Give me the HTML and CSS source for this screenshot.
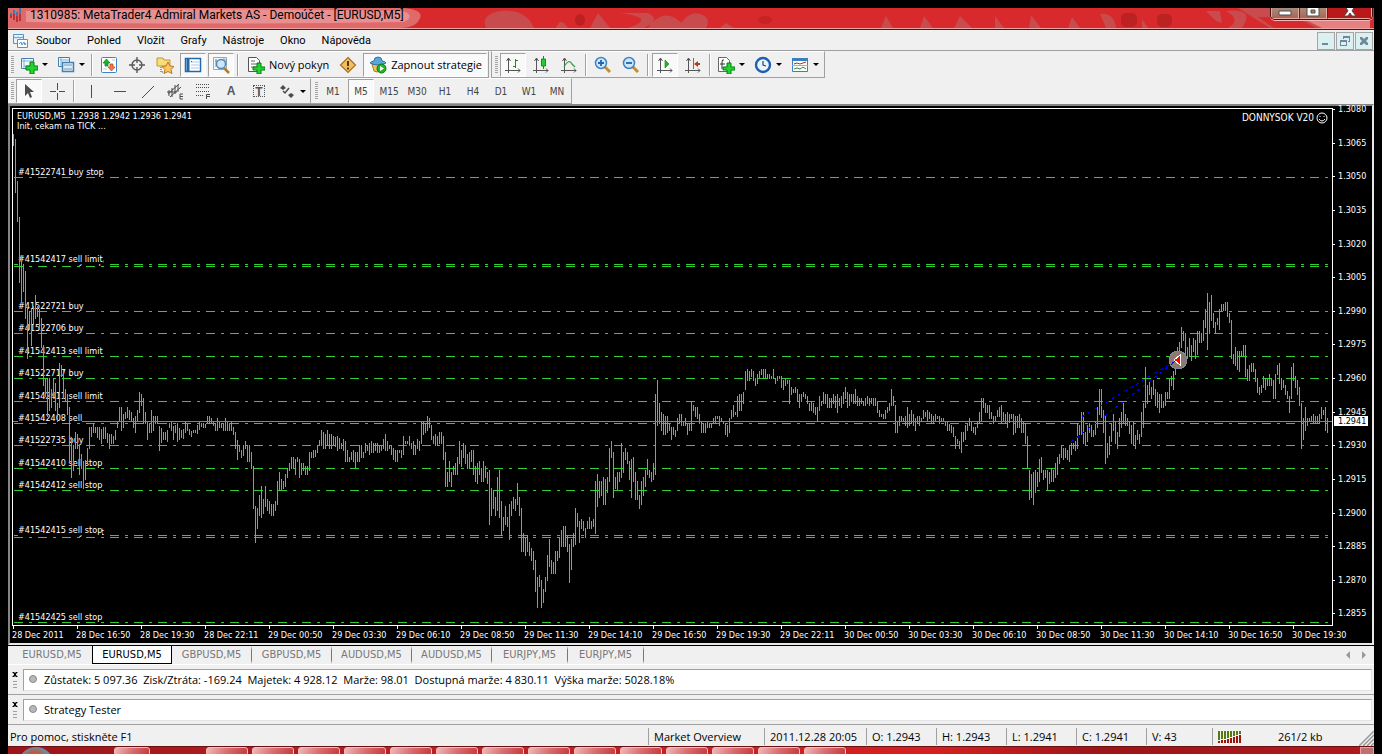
FILE: index.html
```html
<!DOCTYPE html>
<html lang="cs">
<head>
<meta charset="utf-8">
<title>MetaTrader4</title>
<link rel="stylesheet" href="styles.css">
</head>
<body>
<div class="window">
  <header class="title-bar">
    <svg class="title-art" viewBox="0 0 1366 20" preserveAspectRatio="none" aria-hidden="true">
      <path d="M0 0H395Q418 2 411 12Q407 20 390 20H0z" fill="#e0696a"/>
      <path d="M18 3Q200 0 395 3Q408 8 396 14Q200 17 18 14z" fill="#e89091"/>
      <path d="M478 20Q472 7 492 3Q518 0 526 20zM548 20Q552 8 560 20zM582 20L590 5L602 20zM612 5H640Q654 12 636 20H620Q650 10 612 5zM640 20Q654 0 670 12L680 20zM670 20Q680 2 692 6Q704 10 698 20zM712 20l6-5 8 5zM873 20l5-12 7 12zM912 20l4-12 9 12zM946 20l6-12 12 12zM987 20V8l9 12zM1021 20l2-13 10 13zM1060 20l4-11 8 11zM1092 6Q1106 4 1108 20H1098zM1134 20v-9l6 9zM1198 3h14l2 12-6-2zM1218 3q30-3 16 17h-14q14-8-2-17z" fill="#c84b4d"/>
      <ellipse cx="572" cy="12" rx="5" ry="6" fill="#be2021"/><ellipse cx="757" cy="12" rx="7" ry="4" fill="#c82223"/>
      <rect x="1113" y="5" width="16" height="14" rx="5" fill="#bd2223"/><rect x="1149" y="6" width="15" height="13" rx="5" fill="#bd2223"/>
      <path d="M1230 0h132v20H1262z" fill="#c84b4d"/><path d="M1250 9h38l20 11h-42z" fill="#d82a2c"/><path d="M1294 10h68v10h-48z" fill="#e57f80"/>
    </svg>
    <svg class="app-icon" viewBox="0 0 12 14" aria-hidden="true"><path d="M0 5h2v5H0zM3 2h2v8H3zM6 4h2v5H6zM9 0h2v9H9z" fill="#4178ac"/><path d="M0 7h2v3H0zM3 6h2v6H3zM6 8h2v6H6zM9 6h2v7H9z" fill="#bd3036"/></svg>
    <h1 class="title">1310985: MetaTrader4 Admiral Markets AS - Demoúčet - [EURUSD,M5]</h1>
    <div class="caption">
      <button class="cap cap-min" aria-label="Minimalizovat"><svg viewBox="0 0 14 10"><path d="M1 3h12v4H1z"/></svg></button>
      <button class="cap cap-max" aria-label="Maximalizovat"><svg viewBox="0 0 14 10"><path fill-rule="evenodd" d="M1-2h12v10H1zM5 2h4v3H5z"/></svg></button>
      <button class="cap cap-close" aria-label="Zavřít"><svg viewBox="0 0 14 10"><path d="M2-2h4l1 2 1-2h4L9 3l4 5H9L7 5 5 8H1l4-5z"/></svg></button>
    </div>
  </header>

  <nav class="menu" aria-label="Hlavní nabídka">
    <svg class="menu-icon" viewBox="0 0 16 16" aria-hidden="true"><path d="M1.500 1.500h10v9h-10z" fill="#e8f4ff" stroke="#4f95cc"/><path d="M2 4l2 1 2-1 2 1 3-1" fill="none" stroke="#4f95cc"/><path d="M5.500 6.500h10v8h-10z" fill="#fff" stroke="#4f95cc"/><path d="M7 11l2-2 1 3 2-3 1 3 1-2" fill="none" stroke="#4f95cc"/></svg>
    <button>Soubor</button><button>Pohled</button><button>Vložit</button><button>Grafy</button><button>Nástroje</button><button>Okno</button><button>Nápověda</button>
    <div class="mdi">
      <button aria-label="Minimalizovat graf"><svg viewBox="0 0 16 16"><path d="M4 10h6v2H4z"/></svg></button>
      <button aria-label="Obnovit graf"><svg viewBox="0 0 16 16"><path fill-rule="evenodd" d="M6 3h7v6h-2V8h1V5H7v1H6zM3 7h7v6H3zM4 9v3h5V9z"/></svg></button>
      <button aria-label="Zavřít graf"><svg viewBox="0 0 16 16"><path d="M4 4h2l2 2 2-2h2v2l-2 2 2 2v2h-2l-2-2-2 2H4v-2l2-2-2-2z"/></svg></button>
    </div>
  </nav>

  <div class="bars-row main-row">
    <div class="toolbar" role="toolbar" aria-label="Standardní">
      <span class="grip"></span>
      <button class="tool split" aria-label="Nový graf"><svg viewBox="0 0 18 18"><path d="M1.500 2.500h12v10h-12z" fill="#f2f8fd" stroke="#4680ad"/><path d="M2 5h11M4 3v9M4 10h8" stroke="#84b0d0" fill="none"/><path d="M10 6h4v4h4v4h-4v4h-4v-4H6v-4h4z" fill="#1fd62c" stroke="#087d12"/></svg><i class="arrow"></i></button>
      <button class="tool split" aria-label="Profily"><svg viewBox="0 0 18 18"><path d="M1.500 1.500h11v9h-11z" fill="#f2f8fd" stroke="#4680ad"/><path d="M3 4h9M4 2v8" stroke="#84b0d0"/><path d="M5.500 6.500h11v9h-11z" fill="#dcecf8" stroke="#4680ad" stroke-width="1.500"/><path d="M7 9h8M7 13h8" stroke="#6a9cc4"/></svg><i class="arrow"></i></button>
      <span class="sep"></span>
      <button class="tool" aria-label="Přehled trhu"><svg viewBox="0 0 18 18"><rect x="1.500" y="1.500" width="15" height="15" rx="1" fill="#fff" stroke="#3b86c8"/><path d="M3 7l3.500-4L10 7H8v3H5V7z" fill="#1ab425" stroke="#0c7b16" stroke-width=".7"/><path d="M8 11l3.500 4 3.500-4h-2V8h-3v3z" fill="#f0784a" stroke="#b84018" stroke-width=".7"/><path d="M12 4h3M3 13h4" stroke="#b9c7dc"/></svg></button>
      <button class="tool" aria-label="Okno dat"><svg viewBox="0 0 18 18"><circle cx="9" cy="9" r="5" fill="none" stroke="#595959" stroke-width="1.400"/><path d="M9 1v6M9 11v6M1 9h6M11 9h6" stroke="#595959" stroke-width="1.400"/></svg></button>
      <button class="tool" aria-label="Navigátor"><svg viewBox="0 0 18 18"><path d="M1 2h6l1 2h6v6H1z" fill="#f8dd7c" stroke="#c29a2d"/><path d="M5 11v5h4" stroke="#444" stroke-dasharray="1 1" fill="none"/><path d="M12 6l2 4 4 .500-3 3 1 4-4-2-4 2 1-4-3-3 4-.500z" fill="#fbc766" stroke="#b8771d"/></svg></button>
      <button class="tool on" aria-label="Terminál" aria-pressed="true"><svg viewBox="0 0 18 18"><rect x="1.500" y="2.500" width="15" height="13" fill="#fff" stroke="#2268ad" stroke-width="1.500"/><path d="M4 3v12" stroke="#2268ad" stroke-width="3"/><path d="M7 6h8M7 9h8M7 12h8" stroke="#aac6ea"/><path d="M7 5h1v1H7z" fill="#e22"/></svg></button>
      <button class="tool on" aria-label="Tester strategií" aria-pressed="true"><svg viewBox="0 0 18 18"><path d="M1.500 1.500h13v12h-13z" fill="#f7f7f7" stroke="#a7a7a7"/><path d="M4 3v8M3 5h2M12 2v6M14 3v6" stroke="#69a"/><circle cx="9" cy="8" r="4.500" fill="#cfe5f8" stroke="#4a88c2" stroke-width="1.400"/><path d="M12 12l5 5" stroke="#b17e2c" stroke-width="2.500"/></svg></button>
      <span class="sep"></span>
      <button class="tool wide"><svg viewBox="0 0 18 18"><path d="M1.500 1.500h8l3 3v11h-11z" fill="#fff" stroke="#555"/><path d="M4 5h4M4 8h6M4 11h6" stroke="#666"/><path d="M10 7h4v4h4v3h-4v4h-4v-4H6v-3h4z" fill="#1fd62c" stroke="#087d12"/></svg>Nový pokyn</button>
      <button class="tool" aria-label="MetaEditor"><svg viewBox="0 0 18 18"><path d="M9 1.500L16.500 9 9 16.500 1.500 9z" fill="#f0bf62" stroke="#a9701a" stroke-width="1.200"/><path d="M9 5v5M9 11.500v2" stroke="#5a340a" stroke-width="2"/></svg></button>
      <button class="tool wide on" aria-pressed="true"><svg viewBox="0 0 18 18"><path d="M3 8h10l-2 7q-3 2-6 0z" fill="#efc25b" stroke="#a97b20"/><path d="M1 7q2-2 4-2 0-4 4-4t4 4q3 0 4 2-8 4-16 0z" fill="#5aa7da" stroke="#2f73a6"/><circle cx="12.500" cy="12.500" r="4.500" fill="#1fb52b" stroke="#0b7916"/><path d="M11 10l4 2.500-4 2.500z" fill="#fff"/></svg>Zapnout strategie</button>
    </div>
    <div class="toolbar spaced" role="toolbar" aria-label="Grafy">
      <span class="grip"></span>
      <button class="tool on" aria-label="Sloupcový graf" aria-pressed="true"><svg viewBox="0 0 18 18"><path d="M4.500 2v15M2.500 5l2-3 2 3M1 14.500h15M14 12.500l2 2-2 2" fill="none" stroke="#555"/><path d="M11.500 3v9M9 10.500h2M12 4.500h2" stroke="#138f1d"/></svg></button>
      <button class="tool" aria-label="Svíčkový graf"><svg viewBox="0 0 18 18"><path d="M4.500 2v15M2.500 5l2-3 2 3M1 14.500h15M14 12.500l2 2-2 2" fill="none" stroke="#555"/><path d="M11.500 0v13" stroke="#138f1d"/><path d="M9.500 3h4v7h-4z" fill="#21cf2d" stroke="#138f1d"/></svg></button>
      <button class="tool" aria-label="Čárový graf"><svg viewBox="0 0 18 18"><path d="M4.500 2v15M2.500 5l2-3 2 3M1 14.500h15M14 12.500l2 2-2 2" fill="none" stroke="#555"/><path d="M4 11q5-9 8-3l3 3" fill="none" stroke="#3aa043" stroke-width="1.300"/></svg></button>
      <span class="sep"></span>
      <button class="tool" aria-label="Přiblížit"><svg viewBox="0 0 18 18"><path d="M11 11l5 5" stroke="#c58f2d" stroke-width="3"/><circle cx="7" cy="7" r="5.500" fill="#cfe6fa" stroke="#4083c3" stroke-width="1.500"/><path d="M4 7h6M7 4v6" stroke="#2463ad" stroke-width="1.800"/></svg></button>
      <button class="tool" aria-label="Oddálit"><svg viewBox="0 0 18 18"><path d="M11 11l5 5" stroke="#c58f2d" stroke-width="3"/><circle cx="7" cy="7" r="5.500" fill="#cfe6fa" stroke="#4083c3" stroke-width="1.500"/><path d="M4 7h6" stroke="#2463ad" stroke-width="1.800"/></svg></button>
      <span class="sep"></span>
      <button class="tool on" aria-label="Automatický posun" aria-pressed="true"><svg viewBox="0 0 18 18"><path d="M4.500 2v15M2.500 5l2-3 2 3M1 14.500h15M14 12.500l2 2-2 2" fill="none" stroke="#555"/><path d="M9 4l4 4-4 4z" fill="#1fb92b" stroke="#0d7a16" stroke-width=".6"/></svg></button>
      <button class="tool" aria-label="Odsazení grafu"><svg viewBox="0 0 18 18"><path d="M4.500 2v15M2.500 5l2-3 2 3M1 14.500h15M14 12.500l2 2-2 2" fill="none" stroke="#555"/><path d="M9.500 2v11" stroke="#3d79b2"/><path d="M10 8l4-3v2h2v2h-2v2z" fill="#b73a18"/></svg></button>
      <span class="sep"></span>
      <button class="tool split" aria-label="Indikátory"><svg viewBox="0 0 18 18"><path d="M1.500 1.500h8l3 3v11h-11z" fill="#fff" stroke="#666"/><path d="M7 4q-2-1-2 2v7M3 8h5" stroke="#333" fill="none"/><path d="M10 7h4v4h4v3h-4v4h-4v-4H6v-3h4z" fill="#1fd62c" stroke="#087d12"/></svg><i class="arrow"></i></button>
      <button class="tool split" aria-label="Období"><svg viewBox="0 0 18 18"><circle cx="9" cy="9" r="7" fill="#eaf4ff" stroke="#1f5faf" stroke-width="2.400"/><path d="M9 5v4l3 1" stroke="#24456f" fill="none" stroke-width="1.200"/></svg><i class="arrow"></i></button>
      <button class="tool split" aria-label="Šablony"><svg viewBox="0 0 18 18"><path d="M1.500 2.500h15v13h-15z" fill="#fff" stroke="#3c7fc0"/><path d="M1 3.500h16" stroke="#3c7fc0" stroke-width="3"/><path d="M3 8l3-1 3 1 3-1 3-1" stroke="#a33a20" fill="none"/><path d="M1 9.500h16" stroke="#8fb5d8"/><path d="M3 13l3-1 3 1 3-2 3 2" stroke="#2c8f35" fill="none"/></svg><i class="arrow"></i></button>
    </div>
  </div>

  <div class="bars-row">
    <div class="toolbar" role="toolbar" aria-label="Čáry">
      <span class="grip"></span>
      <button class="tool on" aria-label="Kurzor" aria-pressed="true"><svg viewBox="0 0 18 18"><path d="M5 2v12l3-3 2 5 2-1-2-5h4z" fill="#4c4c4c"/></svg></button>
      <button class="tool" aria-label="Nitkový kříž"><svg viewBox="0 0 18 18"><path d="M9.500 1v7M9.500 11v7M2 9.500h6M11 9.500h6" stroke="#4c4c4c"/></svg></button>
      <span class="sep"></span>
      <button class="tool" aria-label="Svislá čára"><svg viewBox="0 0 18 18"><path d="M9.500 3v13" stroke="#4c4c4c"/></svg></button>
      <button class="tool" aria-label="Vodorovná čára"><svg viewBox="0 0 18 18"><path d="M4 9.500h12" stroke="#4c4c4c"/></svg></button>
      <button class="tool" aria-label="Trendová čára"><svg viewBox="0 0 18 18"><path d="M4 16L16 4" stroke="#4c4c4c"/></svg></button>
      <button class="tool" aria-label="Kanál"><svg viewBox="0 0 18 18"><path d="M2 12L13 2M4 15L15 5M6 6v9M9 3v9M12 3v7M3 8v6M1 10h10" stroke="#4c4c4c"/><path d="M17 12h-3v5h3M14 14.500h3" stroke="#4c4c4c" fill="none"/></svg></button>
      <button class="tool" aria-label="Fibonacci"><svg viewBox="0 0 18 18"><path d="M2 2.500h14M2 5.500h14M2 9.500h14M2 13.500h8" stroke="#4c4c4c" stroke-dasharray="1 1"/><path d="M16 12.500h-3.500V17M13 14.500h3" stroke="#4c4c4c" fill="none"/></svg></button>
      <button class="tool letter">A</button>
      <button class="tool letter boxed" aria-label="Textový popisek"><span>T</span></button>
      <button class="tool split" aria-label="Šipky"><svg viewBox="0 0 18 18"><path d="M2 6l3-3 3 3-3 2zM10 13l3-2 3 2-3 3z" fill="#4c4c4c"/><path d="M5 9l2 2 4-5" fill="none" stroke="#4c4c4c" stroke-width="1.500"/></svg><i class="arrow"></i></button>
    </div>
    <div class="toolbar periods" role="toolbar" aria-label="Časové rámce">
      <span class="grip"></span>
      <button class="tool">M1</button><button class="tool on" aria-pressed="true">M5</button><button class="tool">M15</button><button class="tool">M30</button><button class="tool">H1</button><button class="tool">H4</button><button class="tool">D1</button><button class="tool">W1</button><button class="tool">MN</button>
    </div>
  </div>

  <main class="chart">
    <div class="plot">
      <svg class="layer" viewBox="13 109 1319 516" preserveAspectRatio="none" aria-hidden="true">
        <path id="levels" class="levels"/>
        <path d="M13 421h1319v1H13z" class="bid"/>
      </svg>
      <div id="orders"></div>
      <svg class="layer" viewBox="13 109 1319 516" preserveAspectRatio="none" role="img" aria-label="EURUSD M5">
        <path id="bars" class="price-bars"/>
        <path d="M83 421h1249v1H83z" class="bid"/>
        <circle cx="1178" cy="360" r="9" class="halo"/>
        <path d="M1071 442L1176 361M1082 417L1150 376L1176 361" class="trade-line"/>
        <path d="M1174 360l6-5v10z" class="trade-mark"/>
      </svg>
      <div class="caption-left">EURUSD,M5&nbsp; 1.2938 1.2942 1.2936 1.2941<br>Init, cekam na TICK ...</div>
      <div class="caption-right">DONNYSOK V20 <svg viewBox="0 0 12 12" aria-hidden="true"><circle cx="6" cy="6" r="5" fill="none" stroke="#fff"/><path d="M4 4v1M8 4v1M3 7q3 4 6 0" fill="none" stroke="#fff"/></svg></div>
    </div>
    <div class="price-axis" id="prices"></div>
    <div class="time-axis" id="times"></div>
  </main>

  <div class="tabs" role="tablist">
    <button role="tab">EURUSD,M5</button><button role="tab" class="active" aria-selected="true">EURUSD,M5</button><button role="tab">GBPUSD,M5</button><button role="tab">GBPUSD,M5</button><button role="tab">AUDUSD,M5</button><button role="tab">AUDUSD,M5</button><button role="tab" class="short">EURJPY,M5</button><button role="tab" class="short">EURJPY,M5</button>
    <div class="tab-scroll"><button class="go-left" aria-label="Předchozí"></button><button class="go-right" aria-label="Další"></button></div>
  </div>

  <section class="dock">
    <div class="dock-side"><button class="dock-close" aria-label="Zavřít terminál"><svg viewBox="0 0 6 5"><path d="M0 0h2l1 1 1-1h2L4 2v1l2 2H4L3 4 2 5H0l2-2V2z"/></svg></button><span class="dock-grip"></span></div>
    <div class="dock-field"><span class="dot"></span><span>Zůstatek: 5 097.36&nbsp; Zisk/Ztráta: -169.24&nbsp; Majetek: 4 928.12&nbsp; Marže: 98.01&nbsp; Dostupná marže: 4 830.11&nbsp; Výška marže: 5028.18%</span></div>
  </section>
  <section class="dock">
    <div class="dock-side"><button class="dock-close" aria-label="Zavřít tester"><svg viewBox="0 0 6 5"><path d="M0 0h2l1 1 1-1h2L4 2v1l2 2H4L3 4 2 5H0l2-2V2z"/></svg></button><span class="dock-grip"></span></div>
    <div class="dock-field"><span class="dot"></span><span>Strategy Tester</span></div>
  </section>

  <footer class="status">
    <span class="help">Pro pomoc, stiskněte F1</span>
    <span class="cell w-market">Market Overview</span><span class="cell w-date">2011.12.28 20:05</span><span class="cell w-price">O: 1.2943</span><span class="cell w-price">H: 1.2943</span><span class="cell w-price">L: 1.2941</span><span class="cell w-price">C: 1.2941</span><span class="cell w-vol">V: 43</span>
    <span class="cell w-net"><svg viewBox="0 0 24 12" aria-hidden="true"><path d="M0 0h2v9H0zM3 0h2v8H3zM6 0h2v8H6zM9 0h2v7H9zM12 0h2v6h-2zM15 0h2v5h-2zM18 0h2v4h-2zM21 0h2v3h-2z" fill="#577a10"/><path d="M0 10h2v2H0zM3 9h2v3H3zM6 9h2v3H6zM9 8h2v4H9zM12 7h2v5h-2zM15 6h2v6h-2zM18 5h2v7h-2zM21 4h2v8h-2z" fill="#9b1508"/></svg>261/2 kb</span>
    <svg class="resize" viewBox="0 0 15 15" aria-hidden="true"><path d="M0 15L15 0M4 15L15 4M8 15l7-7M12 15l3-3" stroke="#999" stroke-width="1.500"/></svg>
  </footer>
  <div class="taskbar"><span class="orb"></span><span class="task first"></span><span class="tasks" id="tasks"></span><span class="peek"></span></div>
</div>
<script src="chart.js"></script>
</body>
</html>
```
FILE: styles.css
```css
* { box-sizing: border-box; }
body { margin: 0; background: #000; color: #000; font-family: "Open Sans", "Noto Sans", sans-serif; font-size: 11px; }
button { font: inherit; color: inherit; background: none; border: 0; padding: 0; margin: 0; }
.window { display: flex; flex-direction: column; height: 100vh; padding: 8px 8px 0; overflow: hidden; }
.window > * { flex: none; }

.title-bar { position: relative; display: flex; align-items: flex-start; height: 22px; background: #d82a2c; border-bottom: 1px solid #5e0b0c; box-shadow: inset 0 -1px #eba5a3; }
.title-art { position: absolute; left: 0; top: 0; width: 100%; height: 20px; }
.app-icon { position: relative; width: 12px; height: 14px; margin: 0 8px 0 2px; }
.title { position: relative; flex: 1; margin: 0; font: 12px/14px Roboto, "Noto Sans", sans-serif; white-space: nowrap; }
.caption { position: relative; display: flex; height: 12px; margin-right: 1px; border: 1px solid #4a1012; border-top: 0; border-radius: 0 0 5px 5px; overflow: hidden; box-shadow: 0 1px #f0b8b6; }
.cap { display: flex; justify-content: center; width: 28px; height: 11px; background: linear-gradient(#a78c7c, #ad6552); border: 1px solid #e6aaa4; border-top: 0; }
.cap + .cap { border-left-color: #6b1d18; }
.cap svg { width: 14px; height: 10px; fill: #fff; stroke: #4d4d4d; overflow: visible; }
.cap-close { width: 45px; background: #b91918; }

.menu { display: flex; align-items: center; height: 21px; padding-top: 1px; background: #f0f0f0; border-bottom: 1px solid #a0a0a0; font: 11px Roboto, "Noto Sans", sans-serif; }
.menu-icon { width: 16px; height: 16px; margin: 0 0 0 4px; }
.menu > button { padding: 0 8px; line-height: 20px; }
.mdi { display: flex; gap: 1px; margin-left: auto; padding-right: 1px; }
.mdi button { width: 18px; height: 18px; background: #dbf0f0; border: 1px solid #a5a5a5; }
.mdi svg { display: block; width: 16px; height: 16px; fill: #71879a; }

.bars-row { display: flex; height: 26px; background: #f0f0f0; }
.main-row { height: 27px; }
.toolbar { display: flex; align-items: center; gap: 2px; padding: 0 1px 0 3px; border: solid #a0a0a0; border-width: 0 1px 1px 0; border-top: 1px solid #fff; }
.spaced { margin-left: 2px; border-left: 1px solid #a0a0a0; }
.grip { width: 3px; height: 18px; background: repeating-linear-gradient(#a5a5a5 0 1px, #f0f0f0 1px 2px); }
.sep { width: 2px; height: 22px; margin: 0 1px; background: #a0a0a0; border-right: 1px solid #fff; }
.tool { display: flex; align-items: center; justify-content: center; width: 26px; height: 24px; }
.tool svg { flex: none; width: 18px; height: 18px; }
.on { background: #f9f9f9; border: 1px solid #fff; border-top-color: #a0a0a0; border-left-color: #a0a0a0; }
.split { width: 35px; gap: 4px; }
.arrow { border: 3px solid transparent; border-top-color: #000; border-bottom: 0; }
.wide { width: auto; gap: 4px; padding: 0 4px 0 5px; white-space: nowrap; }
.letter { font: bold 12px "Liberation Sans", sans-serif; color: #555; }
.boxed span { width: 12px; height: 12px; line-height: 12px; border: 1px dotted #555; }
.periods { padding-left: 4px; }
.periods .tool { padding-top: 1px; font: 10px "DejaVu Sans Condensed", "DejaVu Sans", sans-serif; color: #444; }

.chart { display: grid; grid-template: minmax(0, 1fr) 17px / minmax(0, 1fr) 39px; background: #000; color: #fff; padding: 2px 0 0 2px; border: 2px solid #e8e8e8; border-top-color: #858585; border-left-color: #858585; font: 9px/10px "DejaVu Sans Condensed", "DejaVu Sans", sans-serif; }
.window > .chart { flex: 1; min-height: 0; }
.plot { position: relative; border: 1px solid #fff; }
.layer { position: absolute; left: 0; top: 0; width: 100%; height: 100%; shape-rendering: crispEdges; }
.levels { stroke: #32cd32; stroke-width: 1; stroke-dasharray: 9 6 3 6; fill: none; }
.bid { fill: #778899; }
.price-bars { fill: #00ff00; }
.halo { fill: #8c7b6d; stroke: #77899a; }
.trade-line { fill: none; stroke: #0000ff; stroke-dasharray: 3 4; }
.trade-mark { fill: #f00; stroke: #fff; }
.order { position: absolute; left: 5px; margin-top: -10px; height: 10px; background: #000; white-space: nowrap; }
.caption-left { position: absolute; left: 4px; top: 2px; }
.caption-right { position: absolute; right: 4px; top: 3px; display: flex; align-items: center; gap: 2px; font-size: 10px; }
.caption-right svg { width: 12px; height: 12px; }
.price-axis, .time-axis { position: relative; }
.time-axis { grid-column: 1 / 3; }
.price { position: absolute; left: 0; padding-left: 5px; margin-top: -5px; white-space: nowrap; background: linear-gradient(#fff, #fff) 0 5px / 2px 1px no-repeat; }
.price.now { left: 1px; padding: 0 2px 0 4px; background: #fff; color: #000; margin-top: -6px; }
.time { position: absolute; top: 0; padding-top: 4px; white-space: nowrap; background: linear-gradient(#fff, #fff) 1px 0 / 1px 3px no-repeat; }

.tabs { display: flex; height: 20px; background: #f0f0f0; border-top: 1px solid #000; border-bottom: 1px solid #fff; font: 11px "DejaVu Sans Condensed", "DejaVu Sans", sans-serif; color: #777; }
.tabs > button { width: 80px; height: 18px; text-align: center; border-right: 1px solid #777; border-top: 4px solid transparent; border-bottom: 4px solid transparent; background-clip: padding-box; line-height: 10px; }
.tabs > button:first-child { width: 84px; padding-left: 4px; border-right: 0; }
.tabs > button.active { height: 18px; background: #fff; color: #000; border: 1px solid #000; border-top: 0; line-height: 17px; }
.tabs > button.short { width: 76px; }
.tab-scroll { display: flex; align-items: center; gap: 12px; margin-left: auto; padding-right: 8px; }
.tab-scroll button { border: 4px solid transparent; }
.tab-scroll .go-left { border-right-color: #999; border-left: 0; }
.tab-scroll .go-right { border-left-color: #999; border-right: 0; }

.dock { display: flex; height: 30px; padding: 4px 2px 3px 4px; background: #f0f0f0; border-bottom: 1px solid #a0a0a0; }
.dock-side { width: 11px; padding-top: 3px; }
.dock-close { display: block; }
.dock-close svg { display: block; width: 6px; height: 5px; }
.dock-grip { display: block; width: 4px; height: 8px; margin: 4px 0 0 1px; background: repeating-linear-gradient(#a0a0a0 0 1px, #f0f0f0 1px 3px); }
.dock-field { flex: 1; display: flex; align-items: center; gap: 7px; padding: 0 0 2px 5px; background: #fff; border: 1px solid #e3e3e3; border-top-color: #a0a0a0; border-left-color: #a0a0a0; white-space: nowrap; }
.dot { width: 8px; height: 8px; border: 1px solid #888; border-radius: 50%; background: #b8b8b8; }

.status { position: relative; display: flex; align-items: center; height: 21px; padding-top: 2px; background: #f0f0f0; white-space: nowrap; }
.help { flex: 1; padding-left: 2px; }
.cell { display: flex; align-items: center; height: 17px; padding-left: 5px; border-left: 1px solid #a0a0a0; }
.w-market { width: 116px; }
.w-date { width: 102px; }
.w-price { width: 70px; }
.w-vol { width: 66px; }
.w-net { width: 162px; gap: 36px; }
.w-net svg { width: 24px; height: 12px; }
.resize { position: absolute; right: 0; bottom: 0; width: 15px; height: 15px; }

.taskbar { display: flex; height: 8px; padding-left: 10px; border-top: 1px solid #6a1012; background: linear-gradient(90deg, #9c1518, #a81a1c 12%, #c51c1e 30%, #d42022 68%, #9c1518 80%, #b01a1c); overflow: hidden; }
.orb { width: 36px; height: 36px; margin-right: 60px; border-radius: 50%; background: radial-gradient(circle at 17px 14px, #e8b04a 0 5px, #c2572b 8px, #6f8ba3 14px, #45627c); }
.task { width: 42px; height: 9px; border: 1px solid #f3c0c0; border-radius: 3px; background: linear-gradient(115deg, #efb9b9, #d96d6f 50%, #c5393b); }
.first { width: 36px; margin-right: 56px; }
.tasks { display: flex; gap: 4px; }
.peek { width: 14px; height: 9px; margin-left: auto; border: 1px solid #e9a0a0; background: #c07070; }
```
FILE: chart.js
```js
// High/low pairs on the plot's vertical scale, one bar every two units.
const FIRST_BAR = 13;
const BARS = `134-146 139-193 181-222 217-283 255-303 264-292 271-319 307-359 311-330 309-346 306-325 295-319 306-317 309-330 318-348 345-386
378-397 378-417 378-411 389-408 378-397 383-411 403-422 363-408 365-377 370-399 389-401 394-415 407-462 437-478 445-471 432-449 434-449 445-475 454-469 461-489 460-480 448-463
427-449 427-437 423-433 427-433 427-438 427-440 429-444 427-439 427-439 433-443 434-449 434-444 436-444 430-440 422-428 407-422 407-431 414-428 412-419 407-418 410-420 412-422 418-428 416-433
410-422 392-413 394-406 398-424 412-424 422-440 424-433 410-433 416-431 416-424 416-424 426-451 428-443 432-440 432-440 430-442 423-428 421-431 426-440 425-433 423-442 428-440 430-438 429-439
422-433 424-431 429-435 431-437 430-433 430-433 425-434 421-430 423-427 423-428 424-428 416-423 416-423 418-423 421-426 423-431 418-431 421-428 423-428 423-431 418-431 421-431 423-431 421-431
427-435 432-449 440-460 445-452 450-458 445-456 441-449 445-462 445-462 452-469 466-509 506-543 508-529 495-516 486-518 499-514 486-507 499-511 501-514 504-516 504-516 501-511 481-505 472-491
479-490 481-489 474-487 468-478 463-471 457-469 457-469 459-475 457-462 459-478 463-475 463-471 466-475 466-475 452-471 452-458 450-458 450-457 445-453 440-446 430-446 432-449 434-449 430-445
434-449 434-449 436-445 437-447 436-451 438-449 443-449 439-451 441-462 450-462 457-462 452-460 450-462 452-469 452-462 445-462 445-458 452-458 443-453 445-451 443-455 441-453 443-453 443-451
443-453 445-453 445-451 439-449 434-451 441-451 445-449 445-455 448-460 450-462 450-462 450-453 450-458 436-455 441-444 441-444 436-446 443-449 441-455 445-455 439-449 441-451 421-444 421-435
423-433 416-431 418-428 425-440 436-444 434-446 436-446 432-444 432-444 436-460 452-487 472-487 461-482 472-487 466-475 463-475 457-475 441-464 450-467 443-458 445-464 454-469 452-469 450-462
450-475 466-482 463-484 461-475 468-482 461-482 466-478 472-484 470-525 488-516 490-509 497-516 477-511 470-518 501-536 517-531 506-525 517-527 504-540 501-516 497-509 499-511 483-505 497-516
508-552 533-552 537-556 535-552 542-556 548-561 551-570 560-592 577-608 575-587 580-608 589-603 577-592 555-581 539-567 560-574 562-574 551-574 551-561 537-558 530-547 526-547 526-547 536-552
544-583 539-570 533-547 508-545 513-527 521-543 519-529 521-531 528-538 521-529 517-529 521-529 519-527 481-534 474-507 481-498 481-496 477-505 479-505 477-493 448-482 441-458 452-498 477-489
472-490 472-482 443-478 452-473 448-460 452-464 461-480 459-498 457-482 472-500 481-500 495-509 481-505 477-496 470-487 459-475 470-478 472-482 463-480 394-475 380-426 403-424 412-431 414-435
416-435 416-433 423-431 427-440 427-435 430-437 418-431 414-423 414-426 421-426 418-426 423-435 423-431 401-431 405-411 407-417 407-419 414-424 421-433 423-433 423-433 421-428 423-428 423-428 418-423
416-423 416-419 416-426 418-421 421-424 423-435 425-437 418-433 410-419 405-417 412-415 396-417 394-411 394-411 392-404 371-390 369-381 371-381 369-377 371-381 378-386 374-384 371-378 369-375
369-379 369-379 374-379 374-379 376-379 369-379 378-384 376-381 376-379 376-388 380-390 379-386 380-384 380-404 387-395 389-393 387-393 389-401 394-408 394-402 392-397 394-399 396-404 403-411
401-411 403-413 407-415 407-422 396-411 401-406 392-404 394-404 394-408 398-408 398-408 394-404 396-408 394-413 398-406 396-408 392-404 387-399 392-408 394-406 394-402 394-404 389-404 396-406
398-406 398-404 401-406 398-406 396-404 398-406 398-404 398-406 398-406 401-413 410-417 414-417 414-419 410-419 407-413 403-411 389-406 396-406 405-433 421-433 416-426 416-422 418-421 416-426
407-428 414-426 410-424 414-426 418-431 416-424 416-426 418-422 410-419 412-417 410-421 412-419 414-423 416-424 414-421 416-419 416-424 418-421 418-421 421-426 422-431 424-431 425-433 427-437
436-449 439-444 441-449 432-453 432-442 425-440 423-431 418-426 421-431 427-433 427-435 421-428 412-423 398-421 398-408 403-413 405-413 405-419 412-419 416-424 416-422 410-417 407-417 405-423
412-421 414-423 412-428 414-423 414-419 414-435 416-433 416-428 414-428 418-433 421-433 423-444 436-468 470-500 474-498 472-505 470-493 472-487 459-482 457-473 470-480 470-478 470-490 472-484
468-482 470-482 463-478 457-475 454-464 445-458 448-460 448-458 450-460 445-462 443-455 443-449 441-451 423-449 425-435 412-435 412-444 432-446 425-442 423-433 425-437 430-437 421-435 407-428
389-415 389-418 410-433 416-464 443-458 436-455 423-442 414-431 422-444 432-449 418-437 412-428 403-424 414-426 418-426 422-434 425-444 421-446 435-449 430-440 434-444 412-437 403-428 367-408
385-404 381-395 387-399 380-395 389-406 392-408 394-413 394-408 401-408 392-406 392-399 378-399 376-386 371-390 363-375 347-369 342-360 327-348 331-341 333-364 347-359 338-357 345-361 338-352
340-359 331-355 331-343 333-343 320-341 309-328 293-350 302-334 295-321 313-328 322-333 318-325 309-330 304-311 304-311 302-311 302-317 313-323 320-359 354-364 347-366 351-370 351-372 351-357
345-357 345-377 369-381 365-381 363-372 363-372 369-382 378-393 387-395 385-393 376-388 378-390 378-386 374-386 378-386 380-399 374-399 365-375 363-384 378-390 380-388 385-395 391-399 396-413
367-399 363-381 376-388 380-395 387-406 403-449 418-440 407-431 418-426 418-421 416-421 414-423 416-423 416-423 414-424 407-419 410-415 407-431 418-433`;

const ORDERS = [
  [177, "#41522741 buy stop"], [266, "#41542420 buy stop"], [264, "#41542417 sell limit"],
  [311, "#41522721 buy"], [333, "#41522706 buy"], [356, "#41542413 sell limit"],
  [378, "#41522717 buy"], [401, "#41542411 sell limit"], [423, "#41542408 sell"],
  [445, "#41522735 buy"], [468, "#41542410 sell stop"], [490, "#41542412 sell stop"],
  [537, "#41542416 buy limit"], [535, "#41542415 sell stop"], [622, "#41542425 sell stop"]
];
const TIMES = ["28 Dec 2011", "28 Dec 16:50", "28 Dec 19:30", "28 Dec 22:11", "29 Dec 00:50", "29 Dec 03:30", "29 Dec 06:10",
  "29 Dec 08:50", "29 Dec 11:30", "29 Dec 14:10", "29 Dec 16:50", "29 Dec 19:30", "29 Dec 22:11", "30 Dec 00:50",
  "30 Dec 03:30", "30 Dec 06:10", "30 Dec 08:50", "30 Dec 11:30", "30 Dec 14:10", "30 Dec 16:50", "30 Dec 19:30"];

const byId = (id) => document.getElementById(id);
const share = (y) => ((y - 109) / 516) * 100 + "%";

function add(parent, className, text, side, value) {
  const el = document.createElement("span");
  el.className = className;
  el.textContent = text;
  if (side) el.style[side] = value;
  byId(parent).append(el);
}

byId("bars").setAttribute("d", BARS.trim().split(/\s+/).map((pair, i) => {
  const [high, low] = pair.split("-").map(Number);
  return `M${FIRST_BAR + i * 2} ${high}h1v${low - high}h-1z`;
}).join(""));

byId("levels").setAttribute("d", ORDERS.map(([y]) => `M14 ${y + 0.5}H1329`).join(""));
ORDERS.forEach(([y, label]) => add("orders", "order", label, "top", share(y)));

for (let i = 0; i < 16; i++) {
  add("prices", "price", (1.308 - i * 0.0015).toFixed(4), "top", share(110 + i * 33.5));
}
add("prices", "price now", "1.2941", "top", share(422));
TIMES.forEach((label, i) => add("times", "time", label, "left", (i * 64 / 1360) * 100 + "%"));
for (let i = 0; i < 14; i++) add("tasks", "task", "");
```
